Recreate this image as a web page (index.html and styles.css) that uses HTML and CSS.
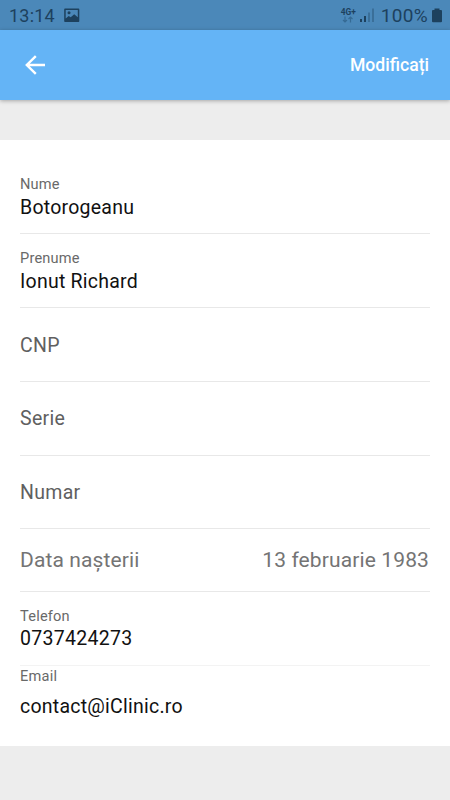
FILE: index.html
```html
<!DOCTYPE html>
<html lang="ro">
<head>
<meta charset="utf-8">
<title>Profil</title>
<link rel="stylesheet" href="styles.css">
</head>
<body>
<div class="status">
  <span class="clock">13:14</span>
  <svg class="picture" width="16" height="15" viewBox="0 0 16 15"><path fill-rule="evenodd" d="M1 .5h13.500a.8.8 0 0 1 .8.800v12a.8.8 0 0 1-.8.800H1a.8.800 0 0 1-.8-.8v-12A.8.8 0 0 1 1 .5zM1.700 2v8.500l3-2.500 2 1.300 3.500-3 3.600 3V2z"/><circle cx="5" cy="4.800" r="1.500"/></svg>
  <div class="indicators">
    <div class="network">
      <span class="generation">4G+</span>
      <svg width="12" height="7" viewBox="0 0 12 7" fill="none"><path d="M3 .5v5.500M1 4l2 2 2-2M8.500 6.500V1M6.500 3l2-2 2 2"/></svg>
    </div>
    <svg class="signal" width="14" height="15" viewBox="0 0 14 15"><path d="M0 11h2v3H0zM4 8h2v6H4z"/><path opacity=".35" d="M8 4.500h2V14H8zM12 .5h2V14h-2z"/></svg>
    <span class="percent">100%</span>
    <svg class="battery" width="10" height="15" viewBox="0 0 10 15"><path d="M2.500.5h5V2H9q1 0 1 1v10.300q0 1-1 1H1q-1 0-1-1V3q0-1 1-1h1.500z"/></svg>
  </div>
</div>
<header class="appbar">
  <svg width="20" height="20" viewBox="0 0 20 20" fill="none"><path d="M20 10H2M10.800 1.100 1.800 10l9 8.900"/></svg>
  <span class="edit">Modificați</span>
</header>
<main class="card">
  <div class="row"><span class="label">Nume</span><span class="value">Botorogeanu</span></div>
  <div class="row"><span class="label">Prenume</span><span class="value">Ionut Richard</span></div>
  <div class="row empty first"><span class="placeholder">CNP</span></div>
  <div class="row empty"><span class="placeholder">Serie</span></div>
  <div class="row empty number"><span class="placeholder">Numar</span></div>
  <div class="row birth"><span>Data nașterii</span><span>13 februarie 1983</span></div>
  <div class="row phone"><span class="label">Telefon</span><span class="value">0737424273</span></div>
  <div class="row email"><span class="label">Email</span><span class="value">contact@iClinic.ro</span></div>
</main>
</body>
</html>
```
FILE: styles.css
```css
* { box-sizing: border-box; }
body {
  margin: 0;
  height: 800px;
  overflow: hidden;
  background: #ededed;
  font-family: Roboto, sans-serif;
}
svg { display: block; flex: none; }
.status {
  display: flex;
  align-items: center;
  height: 30px;
  padding: 1px 8px 0 9px;
  background: #4b88b9;
  color: #1d415e;
  fill: #1d415e;
}
.clock { font-size: 18px; letter-spacing: .2px; line-height: 28px; }
.picture { margin-left: 9px; }
.indicators { display: flex; align-items: center; margin-left: auto; }
.network { display: flex; flex-direction: column; align-items: center; }
.generation { font-size: 8.4px; font-weight: 700; line-height: 8px; }
.network svg { stroke: #356a94; stroke-width: 1.2; }
.signal { margin-left: 4px; }
.percent { margin-left: 7px; font-size: 19px; letter-spacing: .3px; line-height: 28px; }
.battery { margin-left: 4px; }
.appbar {
  position: relative;
  display: flex;
  align-items: center;
  justify-content: space-between;
  height: 70px;
  padding: 0 21px 0 25px;
  background: #64b4f6;
  box-shadow: 0 1px 4px rgba(0, 0, 0, .3);
  color: #fff;
}
.appbar svg { stroke: #fff; stroke-width: 2.4; }
.edit { font-size: 17.6px; font-weight: 500; }
.card {
  height: 606px;
  margin-top: 40px;
  padding: 20px 20px 0;
  background: #fff;
}
.row {
  display: flex;
  flex-direction: column;
  height: 74px;
  padding-top: 15px;
  border-bottom: 1px solid #e8e8e8;
}
.label { color: #696969; font-size: 14.6px; line-height: 18px; letter-spacing: .2px; }
.value { margin-top: 1px; color: #111; font-size: 19.5px; line-height: 28px; letter-spacing: .24px; }
.empty { justify-content: center; padding-top: 1px; }
.placeholder { color: #606060; font-size: 19.5px; line-height: 28px; letter-spacing: .3px; }
.first { padding-top: 3px; }
.number { height: 73px; padding-top: 2px; }
.birth {
  flex-direction: row;
  align-items: center;
  justify-content: space-between;
  height: 63px;
  padding: 0 1px 0 0;
  color: #747474;
  font-size: 21px;
  letter-spacing: .12px;
}
.phone { border-color: #f3f3f3; }
.phone .value { margin-top: 0; letter-spacing: .3px; }
.email { height: 80px; padding-top: 1px; border: 0; }
.email .value { margin-top: 8px; }
```
